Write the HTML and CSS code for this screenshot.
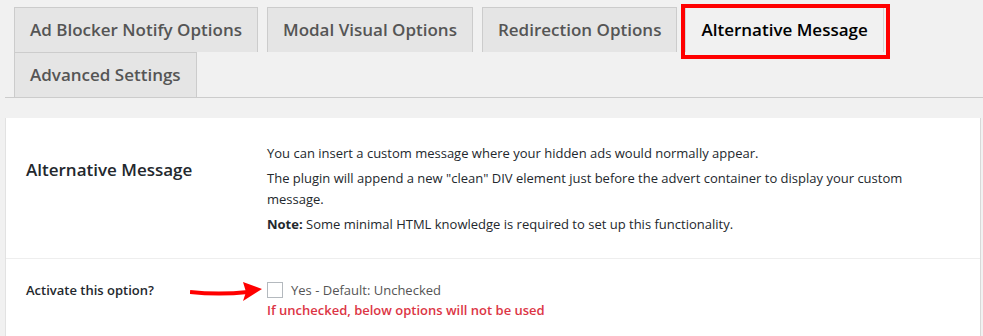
FILE: index.html
```html
<!DOCTYPE html>
<html>
<head>
    <title>Ad Blocker Notify - Settings</title>
    <meta charset="UTF-8">
    <link rel="stylesheet" href="styles.css">
</head>
<body>
    <div class="wrap">
        <nav class="nav-tabs">
            <a class="nav-tab" href="#">Ad Blocker Notify Options</a>
            <a class="nav-tab" href="#">Modal Visual Options</a>
            <a class="nav-tab" href="#">Redirection Options</a>
            <a class="nav-tab active" href="#">Alternative Message</a>
            <a class="nav-tab" href="#">Advanced Settings</a>
        </nav>

        <div class="panel">
            <div class="row intro">
                <h2 class="row-title">Alternative Message</h2>
                <div class="row-body">
                    <p>You can insert a custom message where your hidden ads would normally appear.</p>
                    <p>The plugin will append a new "clean" DIV element just before the advert container to display your custom message.</p>
                    <p><strong>Note:</strong> Some minimal HTML knowledge is required to set up this functionality.</p>
                </div>
            </div>
            <div class="row option">
                <label class="row-label" for="activate">Activate this option?</label>
                <div class="row-body">
                    <svg class="pointer" width="76" height="26" viewBox="0 0 76 26">
                        <path d="M0 14 C 18 16, 40 16, 58 14" stroke="#f00" stroke-width="4" fill="none"/>
                        <path d="M53 4 L72 11 L53 23 L56 14 Z" fill="#f00"/>
                    </svg>
                    <label class="check">
                        <input type="checkbox" id="activate">
                        <span>Yes - Default: Unchecked</span>
                    </label>
                    <div class="warning">If unchecked, below options will not be used</div>
                </div>
            </div>
        </div>
    </div>
</body>
</html>
```

FILE: styles.css
```css
body {
    margin: 0;
    background: #f1f1f1;
    font-family: "Open Sans", "Noto Sans", sans-serif;
    color: #23282d;
}
.wrap {
    margin-left: 5px;
    padding-top: 7px;
}
.nav-tabs {
    display: flex;
    flex-wrap: wrap;
    border-bottom: 1px solid #ccc;
}
.nav-tab {
    position: relative;
    margin-left: 9px;
    padding: 0 15px;
    height: 44px;
    line-height: 44px;
    border: 1px solid #ccc;
    border-bottom: none;
    background: #e5e5e5;
    color: #555;
    font-size: 17px;
    font-weight: 600;
    text-decoration: none;
}
.nav-tab.active {
    margin-left: 8px;
    background: #f1f1f1;
    color: #000;
    border-color: #d5d5d5;
}
.nav-tab.active::after {
    content: "";
    position: absolute;
    top: -4px;
    left: -5px;
    right: -7px;
    bottom: -7px;
    border: 4px solid #f00;
}
.panel {
    margin-top: 20px;
    width: 974px;
    background: #fff;
    border-left: 1px solid #e2e2e2;
    border-right: 1px solid #d8d8d8;
}
.row {
    display: grid;
    grid-template-columns: 241px 1fr;
    padding: 0 40px 0 20px;
}
.intro {
    padding-top: 25px;
    padding-bottom: 23px;
    border-bottom: 1px solid #eee;
}
.row-title {
    margin: 15px 0 0;
    font-size: 17px;
    font-weight: 600;
    line-height: 24px;
}
.row-body p {
    margin: 0 0 4px;
    font-size: 13px;
    line-height: 21px;
}
.row-body p:last-child {
    margin-bottom: 0;
}
.option {
    padding-top: 21px;
    padding-bottom: 20px;
}
.row-label {
    font-size: 13px;
    font-weight: 600;
    line-height: 20px;
}
.option .row-body {
    position: relative;
}
.pointer {
    position: absolute;
    left: -77px;
    top: -2px;
}
.check {
    display: flex;
    align-items: center;
    gap: 8px;
    height: 20px;
    color: #555;
    font-size: 13px;
}
.check input {
    appearance: none;
    margin: 0;
    width: 16px;
    height: 16px;
    border: 1px solid #b4b9be;
    background: #fff;
}
.warning {
    color: #dc3545;
    font-size: 13px;
    font-weight: 600;
    line-height: 20px;
}
```
